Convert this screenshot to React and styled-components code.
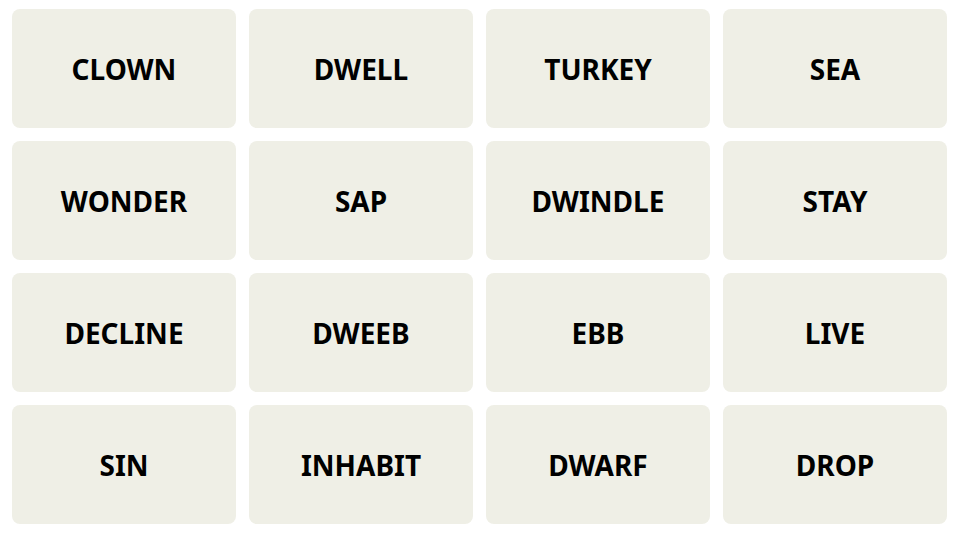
import React from "react";
import styled, { createGlobalStyle } from "styled-components";

const GlobalStyle = createGlobalStyle`
  html, body {
    margin: 0;
    padding: 0;
    background: #ffffff;
  }
`;

const Board = styled.div`
  display: grid;
  grid-template-columns: repeat(4, 224px);
  grid-auto-rows: 119px;
  gap: 13px;
  padding: 9px 12px;
`;

const Tile = styled.button`
  display: flex;
  align-items: center;
  justify-content: center;
  background: #efefe6;
  border: none;
  border-radius: 8px;
  padding: 0;
  font-family: "Noto Sans", "Liberation Sans", sans-serif;
  font-weight: 700;
  font-size: 28px;
  line-height: 1;
  color: #000;
  text-transform: uppercase;
  cursor: pointer;
`;

const words = [
  "CLOWN", "DWELL", "TURKEY", "SEA",
  "WONDER", "SAP", "DWINDLE", "STAY",
  "DECLINE", "DWEEB", "EBB", "LIVE",
  "SIN", "INHABIT", "DWARF", "DROP",
];

const App = () => {
  return (
    <>
      <GlobalStyle />
      <Board>
        {words.map((w) => (
          <Tile key={w}>{w}</Tile>
        ))}
      </Board>
    </>
  );
};

export default App;
